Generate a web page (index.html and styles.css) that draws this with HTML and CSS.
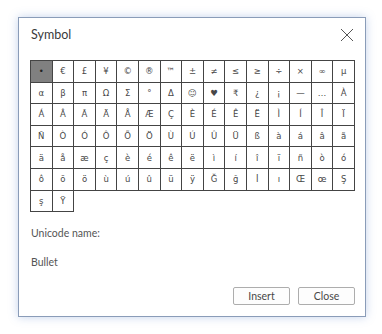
FILE: index.html
```html
<!DOCTYPE html>
<html>
<head>
<meta charset="utf-8">
<link rel="stylesheet" href="styles.css">
</head>
<body>
<div class="dialog">
  <div class="header">
    <span class="title">Symbol</span>
    <svg class="close" width="14" height="14" viewBox="0 0 14 14"><path d="M1 1L13 13M13 1L1 13" stroke="#555" stroke-width="1" fill="none"/></svg>
  </div>
  <div class="grid">
    <div class="cell sel">•</div><div class="cell">€</div><div class="cell">£</div><div class="cell">¥</div><div class="cell">©</div><div class="cell">®</div><div class="cell">™</div><div class="cell">±</div><div class="cell">≠</div><div class="cell">≤</div><div class="cell">≥</div><div class="cell">÷</div><div class="cell">×</div><div class="cell">∞</div><div class="cell">µ</div>
    <div class="cell">α</div><div class="cell">β</div><div class="cell">π</div><div class="cell">Ω</div><div class="cell">Σ</div><div class="cell">°</div><div class="cell">Δ</div><div class="cell">☺</div><div class="cell">♥</div><div class="cell">₹</div><div class="cell">¿</div><div class="cell">¡</div><div class="cell">—</div><div class="cell">…</div><div class="cell">À</div>
    <div class="cell">Á</div><div class="cell">Â</div><div class="cell">Ã</div><div class="cell">Ä</div><div class="cell">Å</div><div class="cell">Æ</div><div class="cell">Ç</div><div class="cell">È</div><div class="cell">É</div><div class="cell">Ê</div><div class="cell">Ë</div><div class="cell">Ì</div><div class="cell">Í</div><div class="cell">Î</div><div class="cell">Ï</div>
    <div class="cell">Ñ</div><div class="cell">Ò</div><div class="cell">Ó</div><div class="cell">Ô</div><div class="cell">Õ</div><div class="cell">Ö</div><div class="cell">Ù</div><div class="cell">Ú</div><div class="cell">Û</div><div class="cell">Ü</div><div class="cell">ß</div><div class="cell">à</div><div class="cell">á</div><div class="cell">â</div><div class="cell">ã</div>
    <div class="cell">ä</div><div class="cell">å</div><div class="cell">æ</div><div class="cell">ç</div><div class="cell">è</div><div class="cell">é</div><div class="cell">ê</div><div class="cell">ë</div><div class="cell">ì</div><div class="cell">í</div><div class="cell">î</div><div class="cell">ï</div><div class="cell">ñ</div><div class="cell">ò</div><div class="cell">ó</div>
    <div class="cell">ô</div><div class="cell">õ</div><div class="cell">ö</div><div class="cell">ù</div><div class="cell">ú</div><div class="cell">û</div><div class="cell">ü</div><div class="cell">ÿ</div><div class="cell">Ğ</div><div class="cell">ğ</div><div class="cell">İ</div><div class="cell">ı</div><div class="cell">Œ</div><div class="cell">œ</div><div class="cell">Ş</div>
    <div class="cell">ş</div><div class="cell">Ÿ</div>
  </div>
  <div class="label">Unicode name:</div>
  <div class="label name">Bullet</div>
  <div class="buttons">
    <button class="btn">Insert</button>
    <button class="btn">Close</button>
  </div>
</div>
</body>
</html>
```
FILE: styles.css
```css
html, body {
  margin: 0;
  padding: 0;
  background: #ffffff;
}
body {
  width: 382px;
  height: 334px;
  overflow: hidden;
  padding-top: 17px;
  box-sizing: border-box;
  font-family: Lato, "Noto Sans", "DejaVu Sans", sans-serif;
  color: #333333;
}
.dialog {
  margin-left: 18px;
  width: 348px;
  height: 300px;
  box-sizing: border-box;
  border: 1px solid #8a9cb8;
  background: #ffffff;
  box-shadow: 0 0 9px rgba(90, 130, 200, 0.35);
  padding: 0 10px 0 11px;
  display: flex;
  flex-direction: column;
}
.header {
  height: 32px;
  display: flex;
  align-items: center;
  justify-content: space-between;
  padding-left: 1px;
  margin-bottom: 10px;
}
.title {
  font-size: 12.5px;
  color: #3a3a3a;
  padding-top: 1px;
}
.close {
  margin-right: 1px;
  margin-top: 1px;
}
.grid {
  display: grid;
  grid-template-columns: repeat(15, 21.6px);
  grid-auto-rows: 21.6px;
}
.cell {
  border: 1px solid #444;
  margin: 0 -1px -1px 0;
  display: flex;
  align-items: center;
  justify-content: center;
  font-family: "DejaVu Sans", "Noto Sans", sans-serif;
  font-size: 8.5px;
  color: #484848;
}
.cell.sel {
  background: #808080;
  color: #222;
}
.label {
  font-size: 10.5px;
  line-height: 14px;
  margin-top: 15px;
  padding-left: 1px;
  color: #555;
}
.name {
  margin-top: 15px;
}
.buttons {
  margin-top: 18px;
  display: flex;
  justify-content: flex-end;
  gap: 8px;
}
.btn {
  width: 57px;
  height: 18px;
  border: 1px solid #adadad;
  border-radius: 2px;
  background: #fdfdfd;
  font-family: Lato, "Noto Sans", sans-serif;
  font-size: 10.5px;
  color: #484848;
  padding: 0;
  line-height: 16px;
}
```
